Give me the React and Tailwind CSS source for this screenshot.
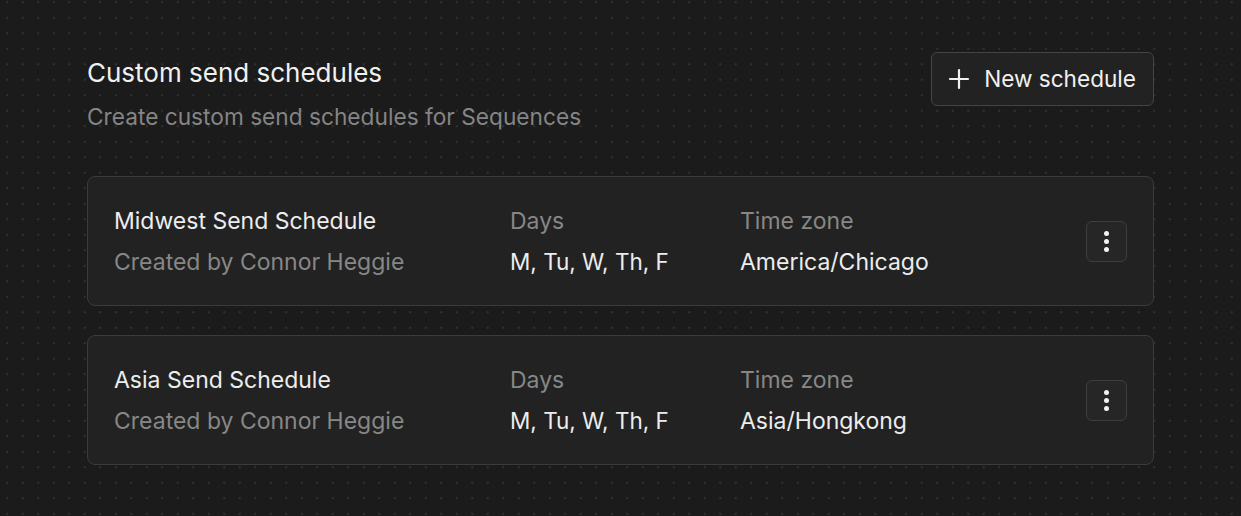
import React from 'react'

const schedules = [
  { name: 'Midwest Send Schedule', owner: 'Connor Heggie', days: 'M, Tu, W, Th, F', tz: 'America/Chicago' },
  { name: 'Asia Send Schedule', owner: 'Connor Heggie', days: 'M, Tu, W, Th, F', tz: 'Asia/Hongkong' },
]

function ScheduleCard({ s }) {
  return (
    <div className="flex h-[130px] items-center rounded-lg border border-[#3b3b3b] bg-[#222222] pl-[26px] pr-[26px]">
      <div className="w-[396px]">
        <div className="text-[23px] leading-[30px] text-[#ededed]">{s.name}</div>
        <div className="mt-[11px] text-[23px] leading-[30px] text-[#878787]">Created by {s.owner}</div>
      </div>
      <div className="w-[230px]">
        <div className="text-[23px] leading-[30px] text-[#878787]">Days</div>
        <div className="mt-[11px] text-[22.5px] leading-[30px] text-[#ededed]">{s.days}</div>
      </div>
      <div className="flex-1">
        <div className="text-[23px] leading-[30px] text-[#878787]">Time zone</div>
        <div className="mt-[11px] text-[23px] leading-[30px] text-[#ededed]">{s.tz}</div>
      </div>
      <button className="flex h-[41px] w-[41px] flex-col items-center justify-center gap-[3px] rounded-md border border-[#3e3e3e] bg-[#262626]">
        <span className="h-[5px] w-[5px] rounded-full bg-[#f2f2f2]" />
        <span className="h-[5px] w-[5px] rounded-full bg-[#f2f2f2]" />
        <span className="h-[5px] w-[5px] rounded-full bg-[#f2f2f2]" />
      </button>
    </div>
  )
}

export default function App() {
  return (
    <div className="min-h-[516px] w-full bg-[#1b1b1b] bg-[radial-gradient(circle,#333333_1px,transparent_1.2px)] bg-[size:15.5px_15.5px] bg-[position:-0.5px_-5.5px] font-['Inter',sans-serif]">
      <div className="ml-[87px] w-[1067px] pt-[52px]">
        <div className="flex items-start justify-between">
          <div>
            <h1 className="mt-[6px] text-[26px] leading-[30px] text-[#f0f0f0]">Custom send schedules</h1>
            <p className="mt-[14px] text-[22.7px] leading-[30px] text-[#858585]">Create custom send schedules for Sequences</p>
          </div>
          <button className="flex h-[54px] items-center gap-[14px] rounded-md border border-[#444444] bg-[#222222] pl-[16px] pr-[17px] text-[22.6px] text-[#f0f0f0]">
            <svg width="22" height="22" viewBox="0 0 22 22" fill="none" stroke="#f0f0f0" strokeWidth="2.2" strokeLinecap="round">
              <path d="M11 2v18M2 11h18" />
            </svg>
            New schedule
          </button>
        </div>
        <div className="mt-[44px] flex flex-col gap-[29px]">
          {schedules.map(s => <ScheduleCard key={s.name} s={s} />)}
        </div>
      </div>
    </div>
  )
}
